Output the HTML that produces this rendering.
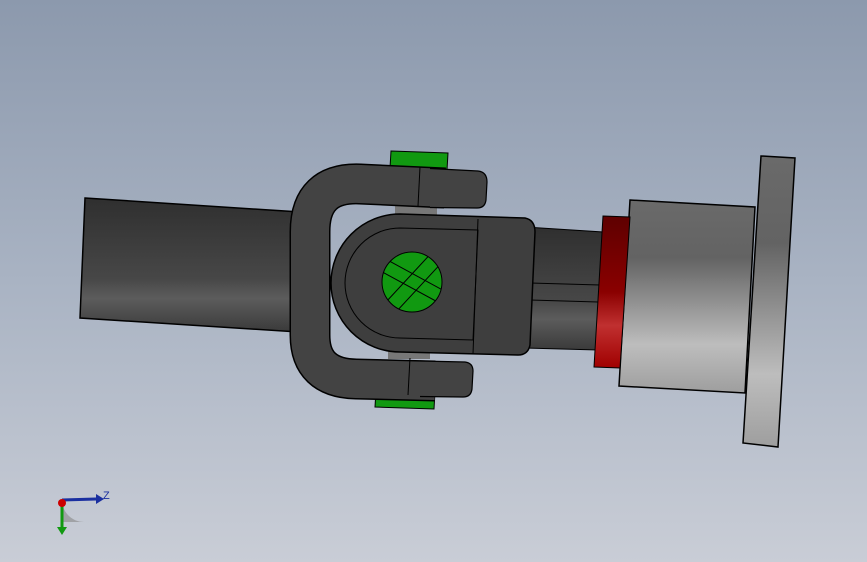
<!DOCTYPE html>
<html><head><style>
html,body{margin:0;padding:0;width:867px;height:562px;overflow:hidden}
body{background:linear-gradient(#8c99ad,#a9b3c3 50%,#c9cdd6)}
svg{position:absolute;left:0;top:0}
</style></head><body>
<svg width="867" height="562" viewBox="0 0 867 562">
<defs>
<linearGradient id="dk" x1="0" y1="0" x2="0" y2="1">
<stop offset="0" stop-color="#2f2f2f"/><stop offset="0.6" stop-color="#474747"/><stop offset="0.75" stop-color="#5c5c5c"/><stop offset="1" stop-color="#3a3a3a"/></linearGradient>
<linearGradient id="lt" x1="0" y1="0" x2="0" y2="1">
<stop offset="0" stop-color="#6a6a6a"/><stop offset="0.3" stop-color="#636363"/><stop offset="0.75" stop-color="#bdbdbd"/><stop offset="1" stop-color="#9e9e9e"/></linearGradient>
<linearGradient id="rd" x1="0" y1="0" x2="0" y2="1">
<stop offset="0" stop-color="#5e0000"/><stop offset="0.5" stop-color="#8a0000"/><stop offset="0.72" stop-color="#c03030"/><stop offset="1" stop-color="#a00000"/></linearGradient>
<clipPath id="cc"><circle cx="412" cy="282" r="30"/></clipPath>
</defs>
<polygon points="85,198 300,212 298,332 80,318" fill="url(#dk)" stroke="#000" stroke-width="1.5"/>
<polygon points="525,227 603,232 598,350 525,348" fill="url(#dk)" stroke="#000" stroke-width="1"/>
<line x1="530" y1="283" x2="600" y2="285" stroke="#000"/><line x1="530" y1="300" x2="598" y2="302" stroke="#000"/>
<polygon points="761,156 795,158 778,447 743,443" fill="url(#lt)" stroke="#000" stroke-width="1.5"/>
<polygon points="630,200 755,207 745,393 619,386" fill="url(#lt)" stroke="#000" stroke-width="1.5"/>
<polygon points="603,216 630,217 620,368 594,367" fill="url(#rd)" stroke="#000" stroke-width="1"/>
<path d="M391,151 L448,153 L447,170 L390,168 Z" fill="#119911" stroke="#000"/>
<path d="M376,390 L435,392 L434,409 L375,407 Z" fill="#119911" stroke="#000"/>
<rect x="395" y="206" width="42" height="14" fill="#777"/>
<rect x="388" y="345" width="42" height="14" fill="#777"/>
<path d="M445,188 L360,184 Q310,182 310,232 L310,335 Q310,378 356,379 L435,381" fill="none" stroke="#000" stroke-width="41" stroke-linejoin="round"/>
<path d="M445,188 L360,184 Q310,182 310,232 L310,335 Q310,378 356,379 L435,381" fill="none" stroke="#434343" stroke-width="38" stroke-linejoin="round"/>
<path d="M430,168.5 L478,171 Q487,172 487,182 L486,200 Q485,208 477,208 L430,207.5" fill="#434343" stroke="#000" stroke-width="1.2"/>
<path d="M420,361 L465,362 Q473,363 473,371 L472,389 Q471,397 463,397 L420,396.5" fill="#434343" stroke="#000" stroke-width="1.2"/>
<line x1="420" y1="167" x2="418" y2="206" stroke="#000"/>
<line x1="410" y1="358" x2="408" y2="395" stroke="#000"/>
<path d="M400,214 L525,218 Q535,220 535,232 L530,345 Q528,355 518,355 L400,352 A69 69 0 0 1 400,214 Z" fill="#3e3e3e" stroke="#000" stroke-width="1.5"/>
<path d="M400,228 L478,230 L473,340 L400,338 A55 55 0 0 1 400,228 Z" fill="none" stroke="#000" stroke-width="1"/>
<line x1="478" y1="219" x2="473" y2="354" stroke="#000"/>
<circle cx="412" cy="282" r="30" fill="#119911" stroke="#000"/>
<g clip-path="url(#cc)" stroke="#000" stroke-width="1">
<path d="M375,268 L445,306 M380,256 L450,294"/>
<path d="M436,248 L386,302 M446,258 L396,312"/>
</g>
<path d="M62,500 A22 22 0 0 0 84,522 L62,522 Z" fill="#888" opacity="0.6"/>
<line x1="62" y1="500" x2="96" y2="499" stroke="#1a2fa0" stroke-width="3"/>
<polygon points="96,494 104,499 96,504" fill="#1a2fa0"/>
<line x1="62" y1="500" x2="62" y2="528" stroke="#119911" stroke-width="3"/>
<polygon points="57,527 62,535 67,527" fill="#119911"/>
<circle cx="62" cy="503" r="4" fill="#c00"/>
<text x="103" y="499" font-family="Liberation Sans,sans-serif" font-size="11" fill="#1a2fa0">Z</text>
</svg>
</body></html>
